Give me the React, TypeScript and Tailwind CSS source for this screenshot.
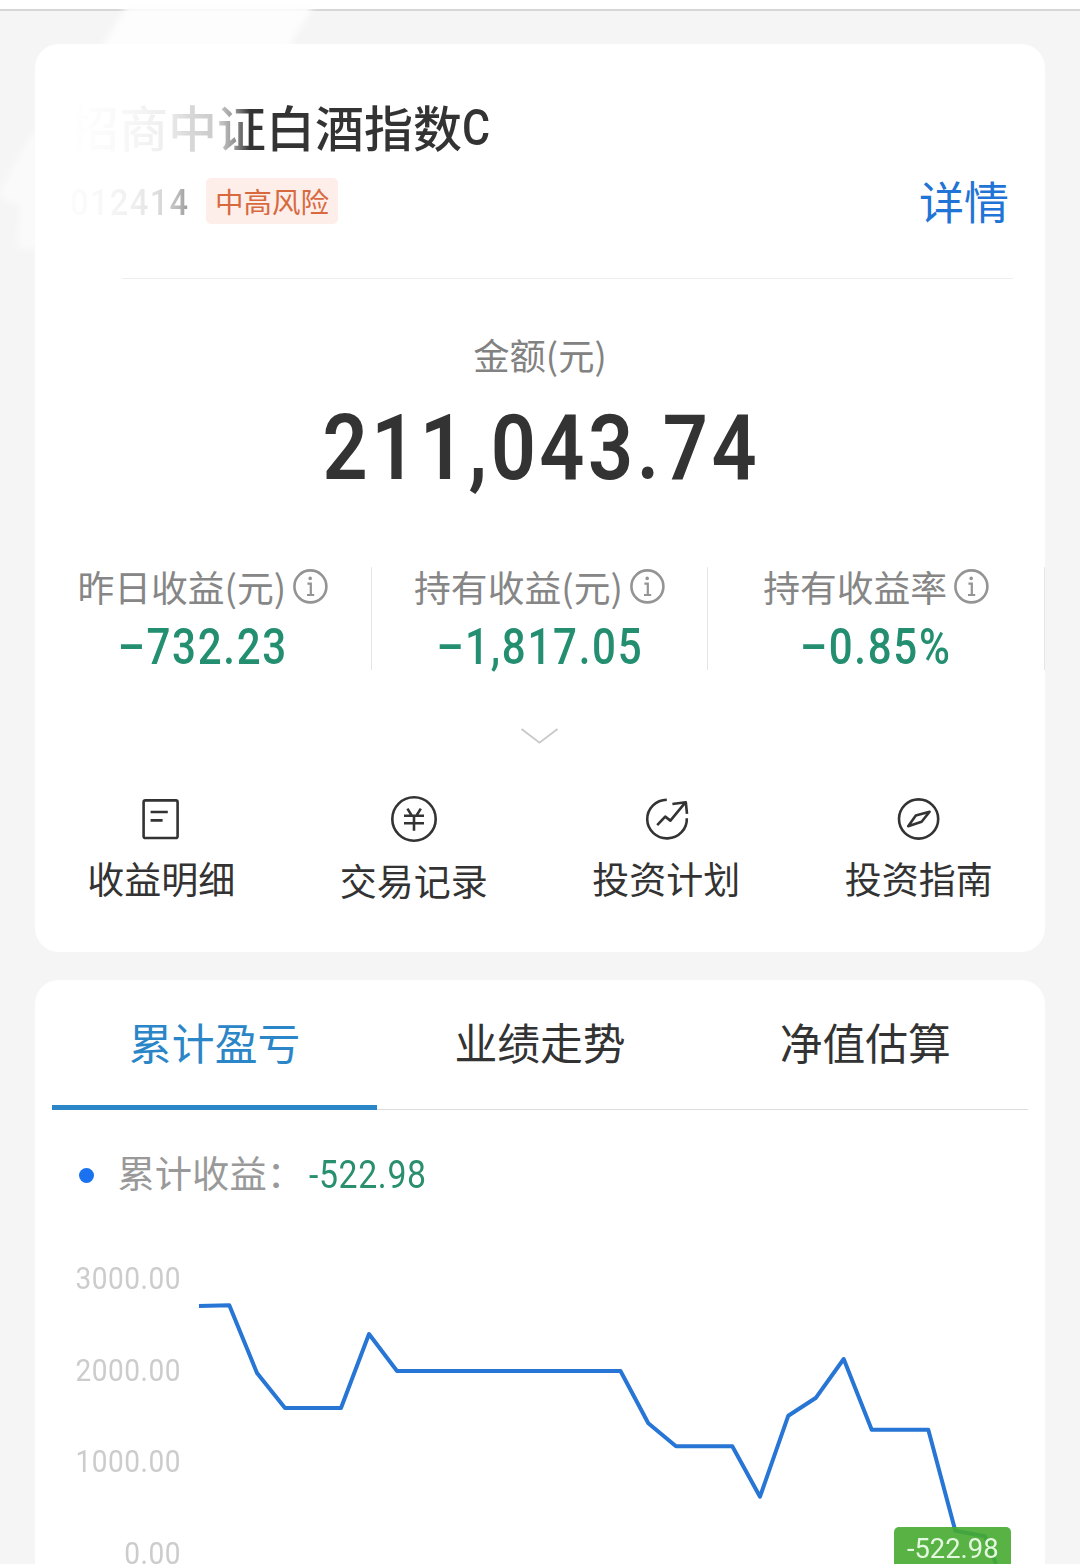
import type { ReactNode } from 'react';

const CJK = "font-['Noto_Sans_CJK_SC',sans-serif]";
const NUM = "font-['Roboto',sans-serif]";

const STATS = [
  { label: '昨日收益(元)', value: '–732.23' },
  { label: '持有收益(元)', value: '–1,817.05' },
  { label: '持有收益率', value: '–0.85%' },
];

const TABS = ['累计盈亏', '业绩走势', '净值估算'];

const AXIS = ['3000.00', '2000.00', '1000.00', '0.00'];

// x / y in chart space, one point per trading day where the slope changes
const POINTS = [
  [4, 73], [34.3, 72.3], [62, 140], [90, 175], [146, 175], [174, 101], [202, 138],
  [425.5, 138], [453.3, 190.3], [481, 213.3], [537.3, 213.3], [565, 263.7], [593.3, 182.7],
  [621, 164.7], [648.7, 126], [676.7, 196.7], [733.3, 196.7], [760.3, 297.7], [790, 303.3], [801, 331],
];

function InfoIcon() {
  return (
    <svg className="size-9 shrink-0" viewBox="0 0 36 36" fill="none" stroke="#949494">
      <circle cx="18.4" cy="17.4" r="16" strokeWidth="2.6" />
      <path d="M15.4 14.6h3.4v11.4M15 26h7.2" strokeWidth="2.2" />
      <circle cx="18.2" cy="9.4" r="1.8" fill="#949494" stroke="none" />
    </svg>
  );
}

function ActionIcon({ children }: { children: ReactNode }) {
  return (
    <svg
      className="size-12"
      viewBox="0 0 48 48"
      fill="none"
      stroke="#333333"
      strokeWidth="2.6"
      strokeLinejoin="round"
    >
      {children}
    </svg>
  );
}

const ACTIONS = [
  {
    label: '收益明细',
    low: false,
    icon: (
      <>
        <rect x="6.6" y="5.4" width="34" height="37.6" rx="1.8" />
        <path d="M13.6 17h17.2M13.6 25.4h12" />
      </>
    ),
  },
  {
    label: '交易记录',
    low: true,
    icon: (
      <>
        <circle cx="24" cy="24" r="21.7" />
        <path d="M17.4 13.6l4.4 7M30.8 13.6l-4.4 7M14 20.7h20M14 28.3h20M24 20.7v15" />
      </>
    ),
  },
  {
    label: '投资计划',
    low: false,
    icon: (
      <>
        <path d="M24.8 4.8A19.8 19.3 0 1 0 44.8 23.2" />
        <path d="M15.2 30.2l8-8.6 5.2 4L43.4 7.4M30.4 9l13.4-1.8 1.2 11.6" />
      </>
    ),
  },
  {
    label: '投资指南',
    low: false,
    icon: (
      <>
        <circle cx="23.6" cy="24" r="19.6" />
        <path d="M13.2 31.2L20.8 20.4 34.6 16.8 26.6 26.8z" />
      </>
    ),
  },
];

function SummaryCard() {
  return (
    <section className="relative h-[908px] rounded-[24px] bg-white pt-[50px]">
      <div className="pr-[36px] pl-[35px]">
        <div className="flex h-16 items-start">
          <h1
            className={`${CJK} h-16 bg-[linear-gradient(90deg,#ffffff_0px,#f9f9f9_50px,#eeeeee_95px,#d8d8d8_120px,#c8c8c8_150px,#909090_166px,#333333_180px)] bg-clip-text text-[49px] leading-[63px] font-medium text-transparent`}
          >
            招商中证白酒指数
          </h1>
          <span className={`${NUM} origin-left scale-x-[0.86] text-[50px] leading-[69px] font-medium text-[#333333]`}>C</span>
        </div>
        <div className="mt-5 flex h-[46px] items-center">
          <div className="w-[136px] pt-[4px]">
            <span
              className={`${NUM} inline-block origin-left scale-x-[0.88] bg-[linear-gradient(90deg,#fcfcfc_0px,#f7f7f7_40px,#eeeeee_75px,#dddddd_100px,#b8b8b8_124px,#8c8c8c_138px)] bg-clip-text text-[37px] leading-[46px] font-medium tracking-[1.6px] text-transparent`}
            >
              012414
            </span>
          </div>
          <span className={`${CJK} h-[46px] rounded-[5px] bg-[#fdeee9] px-[9px] text-[28.5px] leading-[46px] text-[#d8693f]`}>
            中高风险
          </span>
          <a className={`${CJK} ml-auto text-[45px] leading-[46px] text-[#1f74d6]`}>详情</a>
        </div>
      </div>
      <div className="mt-[54px] mr-[32px] ml-[87px] h-px bg-[#eeeeee]" />

      <div className="mt-[51px] flex flex-col items-center">
        <div className={`${CJK} h-12 text-[36.3px] leading-[48px] text-[#828282]`}>金额(元)</div>
        <div
          className={`${NUM} mt-5 h-[100px] scale-x-[0.87] pl-[4px] text-[91px] leading-[100px] font-semibold tracking-[4px] text-[#333333]`}
        >
          211,043.74
        </div>
      </div>

      <div className="mt-[69px] grid grid-cols-3">
        {STATS.map((s) => (
          <div key={s.label} className="h-[103px] border-r border-[#e6e6e6]">
            <div className="flex h-10 items-center justify-center gap-[6px]">
              <span className={`${CJK} h-10 text-[36.8px] leading-[38px] whitespace-nowrap text-[#868686]`}>{s.label}</span>
              <InfoIcon />
            </div>
            <div
              className={`${NUM} mt-[17px] h-[46px] scale-x-[0.85] text-center text-[49.5px] leading-[47px] font-medium tracking-[2px] text-[#238f70]`}
            >
              {s.value}
            </div>
          </div>
        ))}
      </div>

      <svg className="mx-auto mt-[57px] block h-[18px] w-10" viewBox="0 0 40 18" fill="none" stroke="#c8c8c8" strokeWidth="1.8">
        <path d="M1.5 2l18 13.6 18-13.6" />
      </svg>

      <div className="mt-[50px] grid grid-cols-4">
        {ACTIONS.map((a) => (
          <div key={a.label} className="flex flex-col items-center">
            <ActionIcon>{a.icon}</ActionIcon>
            <span className={`${CJK} text-[37px] leading-[48px] text-[#333333] ${a.low ? 'mt-[13px]' : 'mt-[11px]'}`}>
              {a.label}
            </span>
          </div>
        ))}
      </div>
    </section>
  );
}

function Chart() {
  return (
    <div className="mt-[33px] flex h-[331px] items-start">
      <div className={`${NUM} w-[146px] shrink-0 text-right text-[32px] tracking-[0.6px] text-[#cccccc]`}>
        {AXIS.map((v) => (
          <div key={v} className="h-[91.5px] origin-right scale-x-[0.875] leading-[90px]">
            {v}
          </div>
        ))}
      </div>
      <div className="relative ml-[14px] h-[331px] w-[817px]">
        <svg className="h-[331px] w-[817px]" viewBox="0 0 817 331" fill="none">
          <polyline
            points={POINTS.map((p) => p.join(',')).join(' ')}
            stroke="#2775d4"
            strokeWidth="4"
            strokeLinejoin="round"
          />
        </svg>
        <div className="absolute top-[294px] left-[699px] flex h-[52px] w-[117px] justify-center rounded-[5px] bg-[#47aa30]/90">
          <span className={`${NUM} scale-x-[0.96] text-[28.5px] leading-[43px] text-[#e4f8df]`}>-522.98</span>
        </div>
      </div>
    </div>
  );
}

function TrendCard() {
  return (
    <section className="h-[584px] rounded-t-[24px] bg-white">
      <div className="mx-[17px] grid h-[130px] grid-cols-3 border-b border-[#dcdcdc]">
        {TABS.map((t, i) => (
          <div
            key={t}
            className={`${CJK} -mb-px h-[130px] text-center text-[42.8px] leading-[123px] ${
              i === 0 ? 'border-b-[5px] border-[#2b86c8] text-[#2b86c8]' : 'text-[#333333]'
            }`}
          >
            {t}
          </div>
        ))}
      </div>

      <div className="mt-[40px] flex h-[50px] items-center pl-[44px]">
        <span className="size-[15px] rounded-full bg-[#1b72f0]" />
        <span className={`${CJK} ml-[23.5px] h-[50px] text-[37.3px] leading-[45px] text-[#999999]`}>累计收益：</span>
        <span className={`${NUM} ml-[5px] origin-left scale-x-[0.89] text-[38px] leading-[46px] tracking-[0.7px] text-[#2a8f6f]`}>
          -522.98
        </span>
      </div>

      <Chart />
    </section>
  );
}

export default function App() {
  return (
    <div className="relative h-[1564px] w-[1080px] overflow-hidden bg-[#f5f5f5]">
      <div className="h-[11px] border-b-2 border-[#d6d6d6] bg-white" />

      {/* soft highlights behind the first card */}
      <svg className="absolute top-0 left-0 h-[270px] w-[340px]" viewBox="0 0 340 270">
        <defs>
          <filter id="soft" x="-20%" y="-20%" width="140%" height="140%">
            <feGaussianBlur stdDeviation="3" />
          </filter>
        </defs>
        <g fill="#fdfdfd" filter="url(#soft)">
          <path d="M127 6H314L288 48H101z" />
          <path d="M40 122L22 150 0 192V198L20 206 17 248 40 250z" fill="#fafafa" />
        </g>
      </svg>

      <div className="flex flex-col gap-7 px-[35px] pt-[33px]">
        <SummaryCard />
        <TrendCard />
      </div>
    </div>
  );
}
